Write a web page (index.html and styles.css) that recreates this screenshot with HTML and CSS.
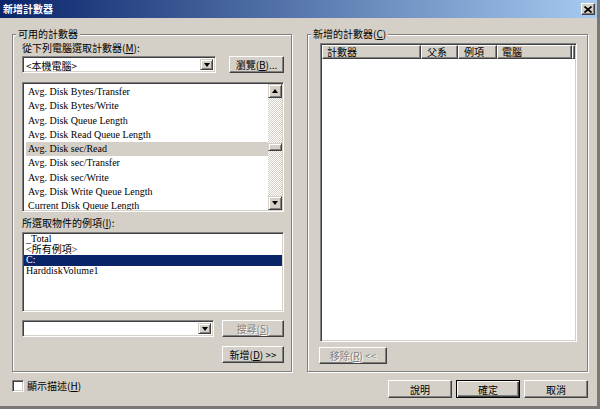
FILE: index.html
```html
<!DOCTYPE html>
<html lang="zh-Hant">
<head>
    <meta charset="UTF-8">
    <title>新增計數器</title>
    <link rel="stylesheet" href="styles.css">
</head>
<body>
    <div class="dialog">
        <div class="titlebar">
            <span class="title">新增計數器</span>
            <button class="close-btn">
                <svg width="8" height="7" viewBox="0 0 8 7"><path d="M0.5 0.5 L7.5 6.5 M7.5 0.5 L0.5 6.5" stroke="#000" stroke-width="1.7"/></svg>
            </button>
        </div>

        <div class="main">
            <!-- left column -->
            <div class="col col-left">
                <fieldset class="group">
                    <legend>可用的計數器</legend>
                    <div class="group-body left-body">
                        <div class="label">從下列電腦選取計數器(<u>M</u>):</div>
                        <div class="row">
                            <div class="combo combo-pc">
                                <span class="combo-text">&lt;本機電腦&gt;</span>
                                <span class="drop-btn"><i class="arrow-down"></i></span>
                            </div>
                            <button class="btn btn-browse">瀏覽(<u>B</u>)...</button>
                        </div>

                        <div class="listbox counters">
                            <ul class="items">
                                <li>Avg. Disk Bytes/Transfer</li>
                                <li>Avg. Disk Bytes/Write</li>
                                <li>Avg. Disk Queue Length</li>
                                <li>Avg. Disk Read Queue Length</li>
                                <li class="selected">Avg. Disk sec/Read</li>
                                <li>Avg. Disk sec/Transfer</li>
                                <li>Avg. Disk sec/Write</li>
                                <li>Avg. Disk Write Queue Length</li>
                                <li>Current Disk Queue Length</li>
                            </ul>
                            <div class="scrollbar">
                                <span class="sb-btn"><i class="arrow-up"></i></span>
                                <div class="sb-track"><span class="sb-thumb"></span></div>
                                <span class="sb-btn"><i class="arrow-down"></i></span>
                            </div>
                        </div>

                        <div class="label label-inst">所選取物件的例項(<u>I</u>):</div>
                        <div class="listbox instances">
                            <ul class="items">
                                <li>_Total</li>
                                <li>&lt;所有例項&gt;</li>
                                <li class="active">C:</li>
                                <li>HarddiskVolume1</li>
                            </ul>
                        </div>

                        <div class="row row-search">
                            <div class="combo combo-search">
                                <span class="combo-text"></span>
                                <span class="drop-btn"><i class="arrow-down"></i></span>
                            </div>
                            <button class="btn btn-wide" disabled>搜尋(<u>S</u>)</button>
                        </div>
                        <div class="row row-add">
                            <button class="btn btn-wide">新增(<u>D</u>) &gt;&gt;</button>
                        </div>
                    </div>
                </fieldset>
                <label class="check"><span class="box"></span><span>顯示描述(<u>H</u>)</span></label>
            </div>

            <!-- right column -->
            <div class="col col-right">
                <fieldset class="group">
                    <legend>新增的計數器(<u>C</u>)</legend>
                    <div class="group-body right-body">
                        <div class="listview">
                            <div class="lv-header">
                                <span class="lv-col col-counter">計數器</span>
                                <span class="lv-col col-parent">父系</span>
                                <span class="lv-col col-inst">例項</span>
                                <span class="lv-col col-pc">電腦</span>
                                <span class="lv-col col-fill"></span>
                            </div>
                        </div>
                        <button class="btn btn-remove" disabled>移除(<u>R</u>) &lt;&lt;</button>
                    </div>
                </fieldset>
                <div class="actions">
                    <button class="btn btn-action">說明</button>
                    <button class="btn btn-action btn-default">確定</button>
                    <button class="btn btn-action">取消</button>
                </div>
            </div>
        </div>
    </div>
</body>
</html>
```

FILE: styles.css
```css
* {
    box-sizing: border-box;
}

body {
    margin: 0;
    background-color: #d4d0c8;
    font-family: "Noto Sans CJK TC", "Noto Sans CJK JP", sans-serif;
    font-size: 10px;
    color: #000;
}

.dialog {
    width: 600px;
    height: 409px;
    background-color: #d4d0c8;
    border-right: 3px solid #7a7874;
    border-bottom: 3px solid #7a7874;
    overflow: hidden;
}

/* title bar */
.titlebar {
    height: 18px;
    display: flex;
    align-items: center;
    justify-content: space-between;
    padding: 0 2px 0 3px;
    background: linear-gradient(to right, #0a246a, #a6caf0);
}

.title {
    color: #fff;
    font-weight: bold;
    font-size: 10px;
    line-height: 14px;
}

.close-btn {
    width: 14px;
    height: 12px;
    padding: 0;
    display: flex;
    align-items: center;
    justify-content: center;
    background-color: #d4d0c8;
    border: 1px solid;
    border-color: #fff #404040 #404040 #fff;
    box-shadow: inset -1px -1px #808080;
}

/* columns */
.main {
    display: flex;
    gap: 15px;
    padding: 9px 0 0 12px;
}

.col-left {
    width: 280px;
}

.col-right {
    width: 281px;
}

.group {
    margin: 0;
    padding: 0;
    min-width: 0;
    border: 1px solid #808080;
    box-shadow: inset 1px 1px #fff, 1px 1px #fff;
}

.group legend {
    margin-left: 3px;
    padding: 0 2px;
    line-height: 14px;
    background-color: #d4d0c8;
}

.left-body {
    padding: 0 7px 8px 9px;
}

.right-body {
    padding: 2px 10px 7px 12px;
}

.label {
    height: 14px;
    line-height: 14px;
}

.label-inst {
    margin-top: 4px;
}

.row {
    display: flex;
    justify-content: space-between;
    margin-top: 1px;
}

.row-search {
    margin-top: 8px;
}

.row-add {
    justify-content: flex-end;
    margin-top: 9px;
}

/* sunken controls */
.combo,
.listbox,
.listview,
.box {
    background-color: #fff;
    border: 1px solid;
    border-color: #808080 #fff #fff #808080;
    box-shadow: inset 1px 1px #404040, inset -1px -1px #d4d0c8;
}

.combo {
    height: 17px;
    display: flex;
    padding: 2px;
}

.combo-pc {
    width: 194px;
}

.combo-search {
    width: 192px;
}

.combo-text {
    flex: 1;
    padding-left: 1px;
    line-height: 13px;
}

.drop-btn,
.sb-btn,
.sb-thumb {
    display: flex;
    align-items: center;
    justify-content: center;
    background-color: #d4d0c8;
    border: 1px solid;
    border-color: #d4d0c8 #404040 #404040 #d4d0c8;
    box-shadow: inset 1px 1px #fff, inset -1px -1px #808080;
}

.drop-btn {
    width: 13px;
}

.arrow-down,
.arrow-up {
    display: block;
    width: 0;
    height: 0;
    border-left: 3.5px solid transparent;
    border-right: 3.5px solid transparent;
}

.arrow-down {
    border-top: 4px solid #000;
}

.arrow-up {
    border-bottom: 4px solid #000;
}

/* list boxes */
.listbox {
    padding: 1px;
}

.items {
    margin: 0;
    list-style: none;
    overflow: hidden;
    font-family: "Liberation Serif", "Noto Sans CJK TC", serif;
    font-size: 10px;
    white-space: nowrap;
}

.counters {
    height: 130px;
    margin-top: 9px;
    display: flex;
}

.counters .items {
    flex: 1;
    padding: 1px 0 0 2px;
    line-height: 14.3px;
}

.counters li {
    padding-left: 2px;
}

.counters li.selected {
    background-color: #d4d0c8;
}

.scrollbar {
    width: 14px;
    display: flex;
    flex-direction: column;
}

.sb-btn {
    height: 14px;
}

.sb-track {
    flex: 1;
    background: repeating-conic-gradient(#d4d0c8 0 25%, #fff 0 50%) 0 0 / 2px 2px;
}

.sb-thumb {
    height: 8px;
    margin-top: 45px;
}

.instances {
    height: 80px;
    margin-top: 2px;
}

.instances .items {
    height: 100%;
    padding: 0;
    line-height: 10.6px;
}

.instances li {
    padding-left: 2px;
}

.instances li.active {
    background-color: #0a246a;
    color: #fff;
}

/* buttons */
.btn {
    height: 17px;
    padding: 0;
    font-family: inherit;
    font-size: 10px;
    color: #000;
    background-color: #d4d0c8;
    border: 1px solid;
    border-color: #fff #404040 #404040 #fff;
    box-shadow: inset -1px -1px #808080;
}

.btn:disabled {
    color: #808080;
    text-shadow: 1px 1px #fff;
}

.btn-browse {
    width: 55px;
}

.btn-wide {
    width: 62px;
}

.btn-remove {
    width: 68px;
    margin-top: 5px;
    margin-left: -1px;
}

.btn-action {
    width: 64px;
    height: 18px;
}

.btn-default {
    border-color: #000;
    box-shadow: inset 1px 1px #fff, inset -1px -1px #404040, inset -2px -2px #808080;
}

/* added counters list */
.listview {
    height: 299px;
    padding: 1px;
}

.lv-header {
    display: flex;
    height: 14px;
}

.lv-col {
    height: 14px;
    line-height: 12px;
    padding-left: 4px;
    background-color: #d4d0c8;
    border: 1px solid;
    border-color: #fff #404040 #404040 #fff;
    box-shadow: inset -1px -1px #808080;
}

.col-counter {
    width: 99px;
}

.col-parent {
    width: 37px;
    padding-left: 5px;
}

.col-inst {
    width: 39px;
    padding-left: 5px;
}

.col-pc {
    width: 75px;
}

.col-fill {
    flex: 1;
    padding: 0;
}

/* bottom row */
.check {
    display: flex;
    align-items: center;
    gap: 3px;
    height: 13px;
    margin-top: 7px;
}

.box {
    width: 12px;
    height: 12px;
}

.actions {
    display: flex;
    justify-content: flex-end;
    gap: 4px;
    margin-top: 8px;
}
```
